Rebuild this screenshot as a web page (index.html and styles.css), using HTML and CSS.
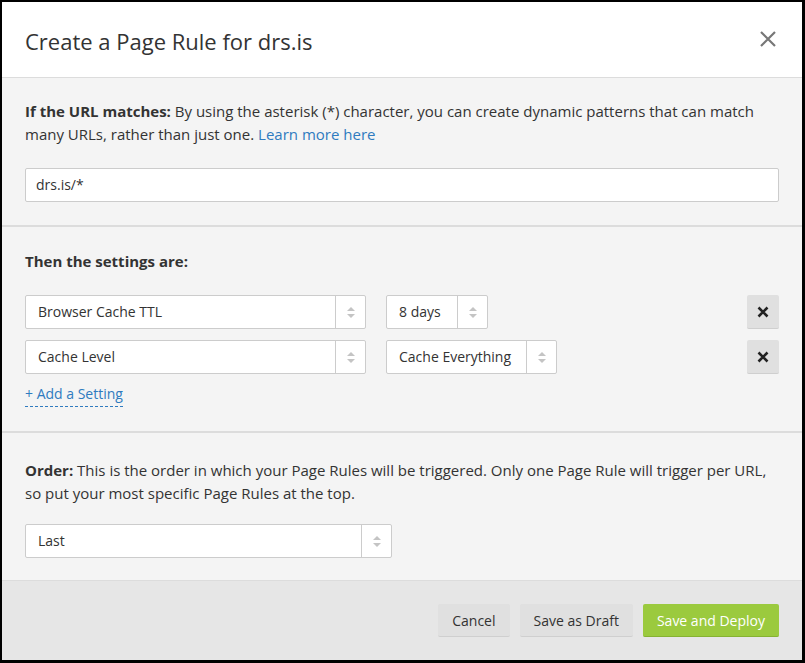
FILE: index.html
```html
<!DOCTYPE html>
<html>
<head>
<meta charset="utf-8">
<link rel="stylesheet" href="styles.css">
</head>
<body>
<div class="dialog">
  <div class="header">
    <h1 class="title">Create a Page Rule for drs.is</h1>
    <span class="close">
      <svg width="18" height="18" viewBox="0 0 18 18"><path d="M2 2L16 16M16 2L2 16" stroke="#777" stroke-width="2.2" fill="none"/></svg>
    </span>
  </div>
  <div class="section s1">
    <p class="text"><b>If the URL matches:</b> By using the asterisk (*) character, you can create dynamic patterns that can match many URLs, rather than just one. <a class="link">Learn more here</a></p>
    <div class="input">drs.is/*</div>
  </div>
  <div class="section s2">
    <p class="text"><b>Then the settings are:</b></p>
    <div class="rows">
      <div class="row">
        <div class="select w340"><span class="val">Browser Cache TTL</span><span class="arrows"><i class="up"></i><i class="down"></i></span></div>
        <div class="select w101"><span class="val">8 days</span><span class="arrows"><i class="up"></i><i class="down"></i></span></div>
        <button class="remove" aria-label="Remove"><svg width="12" height="12" viewBox="0 0 12 12"><path d="M1.5 1.5L10.5 10.5M10.5 1.5L1.5 10.5" stroke="#222" stroke-width="2.6" fill="none"/></svg></button>
      </div>
      <div class="row">
        <div class="select w340"><span class="val">Cache Level</span><span class="arrows"><i class="up"></i><i class="down"></i></span></div>
        <div class="select w170"><span class="val">Cache Everything</span><span class="arrows"><i class="up"></i><i class="down"></i></span></div>
        <button class="remove" aria-label="Remove"><svg width="12" height="12" viewBox="0 0 12 12"><path d="M1.5 1.5L10.5 10.5M10.5 1.5L1.5 10.5" stroke="#222" stroke-width="2.6" fill="none"/></svg></button>
      </div>
    </div>
    <a class="add">+ Add a Setting</a>
  </div>
  <div class="section s3">
    <p class="text"><b>Order:</b> This is the order in which your Page Rules will be triggered. Only one Page Rule will trigger per URL, so put your most specific Page Rules at the top.</p>
    <div class="select w366"><span class="val">Last</span><span class="arrows"><i class="up"></i><i class="down"></i></span></div>
  </div>
  <div class="footer">
    <button class="btn">Cancel</button>
    <button class="btn">Save as Draft</button>
    <button class="btn primary">Save and Deploy</button>
  </div>
</div>
</body>
</html>
```
FILE: styles.css
```css
html, body {
  margin: 0;
  padding: 0;
  background: #000;
}
body {
  padding: 2px 3px 3px 2px;
  font-family: "Open Sans", "Liberation Sans", sans-serif;
  color: #333;
}
.dialog {
  width: 800px;
  height: 658px;
  background: #f4f4f4;
  display: flex;
  flex-direction: column;
}
.header {
  background: #fff;
  border-bottom: 1px solid #dcdcdc;
  display: flex;
  align-items: center;
  justify-content: space-between;
  padding: 0 25px 0 23px;
  box-sizing: border-box;
  height: 76px;
}
.title {
  margin: 0;
  font-size: 22px;
  font-weight: 400;
  color: #333;
  position: relative;
  top: 1px;
}
.close {
  display: flex;
  position: relative;
  top: -1px;
}
.section {
  padding: 22px 23px 24px 23px;
  border-bottom: 2px solid #dcdcdc;
}
.s1 {
  padding-bottom: 23px;
}
.text {
  margin: 0;
  font-size: 15px;
  line-height: 23px;
  color: #333;
}
.text b {
  font-weight: 700;
}
.link {
  color: #2f7bbf;
}
.input {
  margin-top: 22px;
  height: 34px;
  box-sizing: border-box;
  background: #fff;
  border: 1px solid #ccc;
  border-radius: 2px;
  font-size: 14px;
  line-height: 32px;
  padding-left: 10px;
  color: #333;
}
.s2 {
  padding-top: 23px;
  padding-bottom: 24px;
}
.rows {
  margin-top: 22px;
  display: flex;
  flex-direction: column;
  gap: 11px;
}
.row {
  display: flex;
  align-items: center;
}
.select {
  height: 34px;
  box-sizing: border-box;
  background: #fff;
  border: 1px solid #ccc;
  border-radius: 2px;
  display: flex;
  font-size: 14px;
  color: #333;
}
.select .val {
  flex: 1;
  padding-left: 12px;
  line-height: 32px;
  white-space: nowrap;
}
.select .arrows {
  width: 29px;
  border-left: 1px solid #ccc;
  display: flex;
  flex-direction: column;
  align-items: center;
  justify-content: center;
  gap: 3px;
}
.arrows i {
  display: block;
  width: 0;
  height: 0;
  border-left: 4px solid transparent;
  border-right: 4px solid transparent;
}
.arrows .up {
  border-bottom: 4px solid #c4c4c4;
}
.arrows .down {
  border-top: 4px solid #c4c4c4;
}
.w340 { width: 341px; }
.w101 { width: 102px; margin-left: 20px; }
.w170 { width: 171px; margin-left: 20px; }
.w366 { width: 367px; margin-top: 19px; }
.remove {
  margin-left: auto;
  width: 32px;
  height: 34px;
  border: none;
  border-bottom: 1px solid #cfcfcf;
  border-radius: 2px;
  background: #e0e0e0;
  padding: 0;
  display: flex;
  align-items: center;
  justify-content: center;
}
.add {
  display: inline-block;
  margin-top: 10px;
  font-size: 14px;
  line-height: 20px;
  color: #2f7bbf;
  border-bottom: 1px dashed #2f7bbf;
  padding-bottom: 2px;
}
.s3 {
  padding-top: 26px;
  padding-bottom: 22px;
  border-bottom: 1px solid #dcdcdc;
}
.footer {
  flex: 1;
  background: #e6e6e6;
  display: flex;
  justify-content: flex-end;
  align-items: center;
  gap: 10px;
  padding: 0 23px 0 0;
}
.btn {
  height: 33px;
  border: none;
  border-bottom: 1px solid #cfcfcf;
  border-radius: 2px;
  background: #e0e0e0;
  font-family: "Open Sans", "Liberation Sans", sans-serif;
  font-size: 14px;
  color: #333;
  padding: 0 14px;
}
.btn.primary {
  background: #9bca3e;
  border-bottom-color: #86b232;
  color: #fff;
}
```
